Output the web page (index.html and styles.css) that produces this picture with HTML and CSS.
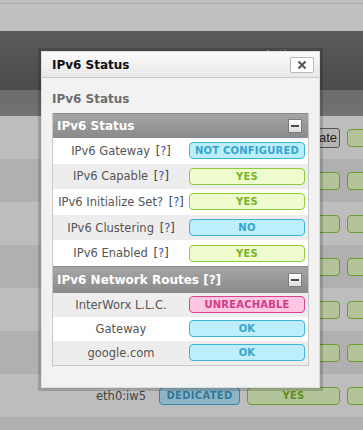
FILE: index.html
```html
<!DOCTYPE html>
<html lang="en">
<head>
  <meta charset="UTF-8" />
  <title>IPv6 Status</title>
  <meta name="viewport" content="width=device-width, initial-scale=1.0" />
  <link rel="stylesheet" href="styles.css">
</head>
<body>
  <div class="page">
    <div class="topbar"></div>
    <div class="navbar"><span class="nav-text">Actions</span></div>
    <div class="subbar"></div>
    <div class="list">
      <div class="row light"><span></span><span></span><span class="btn-gray">ate</span><span class="tag yes"></span></div>
      <div class="row dark"><span></span><span></span><span class="tag yes"></span><span class="tag yes"></span></div>
      <div class="row light"><span></span><span></span><span class="tag yes"></span><span class="tag yes"></span></div>
      <div class="row dark"><span></span><span></span><span class="tag yes"></span><span class="tag yes"></span></div>
      <div class="row light"><span></span><span></span><span class="tag yes"></span><span class="tag yes"></span></div>
      <div class="row dark"><span></span><span></span><span class="tag yes"></span><span class="tag yes"></span></div>
      <div class="row light">
        <span class="iface">eth0:iw5</span>
        <span class="tag blue">DEDICATED</span>
        <span class="tag yes">YES</span>
        <span class="tag yes"></span>
      </div>
      <div class="row dark"><span></span><span class="tag blue"></span><span class="tag yes"></span><span class="tag yes"></span></div>
    </div>
  </div>

  <div class="dialog">
    <div class="dialog-head">
      <span class="dialog-title">IPv6 Status</span>
      <button class="close-btn">
        <svg width="10" height="10" viewBox="0 0 10 10"><path d="M1.5 1.5L8.5 8.5M8.5 1.5L1.5 8.5" stroke="#555" stroke-width="2"/></svg>
      </button>
    </div>
    <div class="dialog-body">
      <h2>IPv6 Status</h2>
      <div class="panel">
        <div class="panel-head">
          <span>IPv6 Status</span>
          <span class="min-btn"></span>
        </div>
        <div class="item"><span class="label">IPv6 Gateway <span class="help">[<b>?</b>]</span></span><span class="badge blue">NOT CONFIGURED</span></div>
        <div class="item alt"><span class="label">IPv6 Capable <span class="help">[<b>?</b>]</span></span><span class="badge green">YES</span></div>
        <div class="item"><span class="label">IPv6 Initialize Set? <span class="help">[<b>?</b>]</span></span><span class="badge green">YES</span></div>
        <div class="item alt"><span class="label">IPv6 Clustering <span class="help">[<b>?</b>]</span></span><span class="badge blue">NO</span></div>
        <div class="item"><span class="label">IPv6 Enabled <span class="help">[<b>?</b>]</span></span><span class="badge green">YES</span></div>
        <div class="panel-head tall">
          <span>IPv6 Network Routes <span class="help-w">[?]</span></span>
          <span class="min-btn"></span>
        </div>
        <div class="item route alt"><span class="label">InterWorx L.L.C.</span><span class="badge pink">UNREACHABLE</span></div>
        <div class="item route"><span class="label">Gateway</span><span class="badge blue">OK</span></div>
        <div class="item route alt"><span class="label">google.com</span><span class="badge blue">OK</span></div>
      </div>
    </div>
  </div>
</body>
</html>
```

FILE: styles.css
```css
html, body {
  margin: 0;
  padding: 0;
  height: 100%;
  overflow: hidden;
  font-family: "DejaVu Sans", Verdana, sans-serif;
  background-color: #b1b1b1;
}

/* page behind the dimmed overlay */
.page {
  width: 100%;
  height: 100vh;
  overflow: hidden;
}

.topbar {
  height: 28px;
  background-color: #c0c0c0;
  border-top: 3px solid #c0c0c0;
  box-shadow: inset 0 1px 0 #a6a6a6;
}

.navbar {
  height: 59px;
  background: linear-gradient(#5b5b5b, #4b4b4b);
  position: relative;
  overflow: hidden;
}

.nav-text {
  position: absolute;
  left: 264px;
  top: 17px;
  font-size: 12px;
  color: #a9a9a9;
}

.subbar {
  height: 26px;
  background: linear-gradient(#6b6b6b, #737373);
}

.row {
  height: 43px;
  display: grid;
  grid-template-columns: 63px 81px 93px 93px;
  column-gap: 7px;
  align-items: center;
  padding-left: 89px;
  overflow: hidden;
}

.row.light { background-color: #bdbdbd; }
.row.dark { background-color: #b0b0b0; }

.tag {
  box-sizing: border-box;
  height: 18px;
  border-radius: 4px;
  border: 1px solid #6e9a2f;
  background-color: #b3c39a;
  font-size: 10px;
  font-weight: bold;
  color: #5e8f1f;
  text-align: center;
  line-height: 16px;
  letter-spacing: 0.3px;
}

.tag.blue {
  border-color: #3b86a6;
  background-color: #8fb5c4;
  color: #2f7a9c;
}

.iface {
  font-size: 11.5px;
  color: #444;
  text-align: right;
  padding-right: 6px;
}

.btn-gray {
  box-sizing: border-box;
  justify-self: end;
  width: 40px;
  height: 20px;
  padding-right: 2px;
  border: 1px solid #555;
  border-radius: 3px;
  background-color: #b6b6b6;
  font-family: "Liberation Sans", Arial, sans-serif;
  font-size: 13px;
  line-height: 18px;
  text-align: right;
  color: #222;
}

/* dialog */
.dialog {
  position: absolute;
  left: 41px;
  top: 51px;
  width: 277px;
  background-color: #f2f2f2;
  border: 1px solid #dcdcdc;
  box-shadow: 0 0 0 3px rgba(0, 0, 0, 0.17);
}

.dialog-head {
  height: 25px;
  display: flex;
  align-items: center;
  justify-content: space-between;
  padding: 0 5px 0 10px;
  background: linear-gradient(#fbfbfb, #e7e7e7);
  border-bottom: 1px solid #c8c8c8;
}

.dialog-title {
  font-size: 12px;
  font-weight: bold;
  color: #111;
}

.close-btn {
  width: 24px;
  height: 16px;
  padding: 0;
  display: flex;
  align-items: center;
  justify-content: center;
  background-color: #fff;
  border: 1px solid #b9b9b9;
  border-radius: 2px;
}

.dialog-body {
  padding: 13px 10px 21px 10px;
}

h2 {
  margin: 0 0 6px 0;
  font-size: 12px;
  font-weight: bold;
  color: #6d6d6d;
  line-height: 16px;
}

.panel {
  border: 1px solid #c9c9c9;
  border-top: none;
}

.panel-head {
  height: 25px;
  display: flex;
  align-items: center;
  justify-content: space-between;
  padding: 0 6px 0 4px;
  background: linear-gradient(#a5a5a5, #8a8a8a);
  border-top: 1px solid #8c8c8c;
  box-sizing: border-box;
  font-size: 12px;
  font-weight: bold;
  color: #fff;
}

.panel-head.tall {
  height: 27px;
}

.help-w {
  font-weight: bold;
}

.min-btn {
  box-sizing: border-box;
  width: 14px;
  height: 14px;
  border: 1px solid #7b7b7b;
  border-radius: 1px;
  background: linear-gradient(#ffffff, #dcdcdc);
  position: relative;
}

.min-btn::after {
  content: "";
  position: absolute;
  left: 2px;
  top: 5px;
  width: 8px;
  height: 2px;
  background-color: #4a4a4a;
}

.item {
  height: 25.6px;
  display: grid;
  grid-template-columns: 1fr 116px;
  align-items: center;
  padding-right: 3px;
  background-color: #fff;
}

.item.alt { background-color: #ededed; }
.item.route { height: 24px; }

.label {
  text-align: center;
  font-size: 11.5px;
  color: #555;
}

.help {
  margin-left: 2px;
  color: #444;
}

.help b {
  font-weight: normal;
  color: #3556b8;
}

.badge {
  box-sizing: border-box;
  height: 17px;
  border-radius: 4px;
  border: 1px solid;
  font-size: 10px;
  font-weight: bold;
  text-align: center;
  line-height: 15px;
  letter-spacing: 0.2px;
}

.badge.blue {
  background-color: #bdeefb;
  border-color: #40b3d8;
  color: #35a5ce;
}

.badge.green {
  background-color: #effccd;
  border-color: #8dcc3c;
  color: #76b528;
}

.badge.pink {
  background-color: #fdc7e1;
  border-color: #e0408f;
  color: #d43987;
}
```
